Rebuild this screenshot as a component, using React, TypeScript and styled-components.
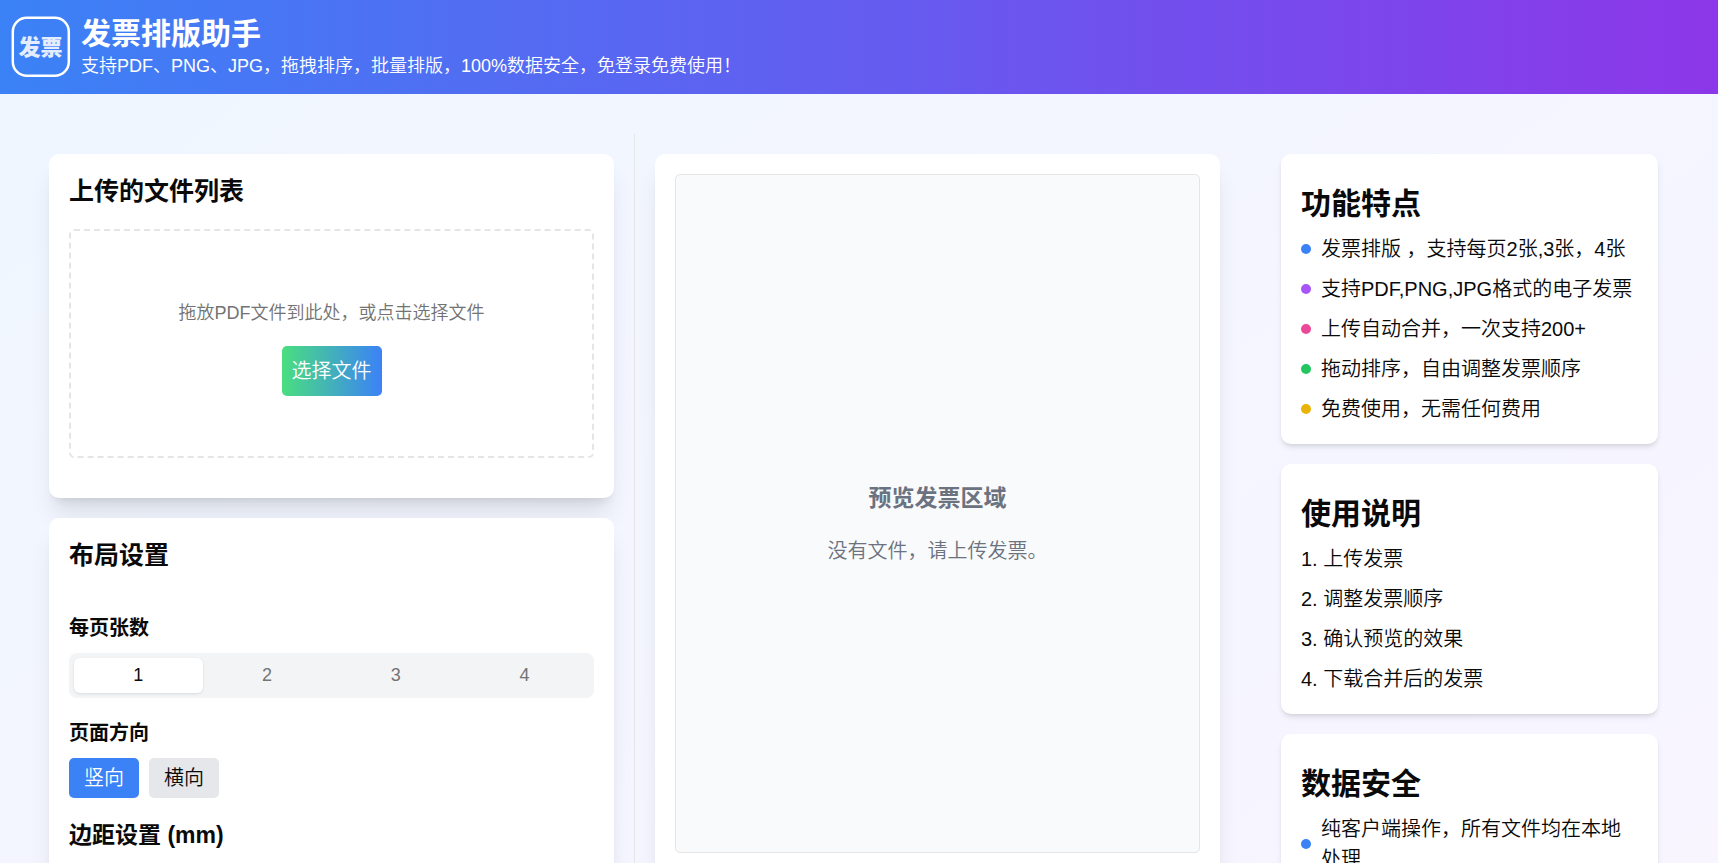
import React, { useState } from "react";
import styled, { createGlobalStyle } from "styled-components";

const GlobalStyle = createGlobalStyle`
  *, *::before, *::after { box-sizing: border-box; }
  body {
    margin: 0;
    color: #0a0a0a;
    font-family: "Liberation Sans", "Noto Sans CJK SC", sans-serif;
    font-size: 20px;
    font-weight: 350;
    line-height: 30px;
  }
  h1, h2, h3, p, ul, ol { margin: 0; padding: 0; }
  button { font: inherit; color: inherit; border: 0; cursor: pointer; }
`;

const Page = styled.div`
  min-height: 150vh;
  background: linear-gradient(to bottom right, #eff6ff, #faf5ff);
`;

const Header = styled.header`
  display: flex;
  align-items: center;
  gap: 10px;
  padding: 14px 11px 15px;
  color: #fff;
  background: linear-gradient(to right, #3b82f6, #8c37e9);
`;

const Logo = styled.svg`
  flex: none;
  width: 60px;
  height: 62px;
`;

const SiteTitle = styled.h1`
  font-size: 30px;
  font-weight: 700;
  line-height: 40px;
`;

const Tagline = styled.p`
  font-size: 18px;
  line-height: 25px;
`;

const Main = styled.main`
  display: grid;
  grid-template-columns: minmax(0, 1fr) 417px;
  gap: 21px;
  padding: 40px 40px 40px 29px;
`;

const Workspace = styled.div`
  display: grid;
  grid-template-columns: minmax(0, 1fr) 1px minmax(0, 1fr);
`;

const Panel = styled.div`
  display: flex;
  flex-direction: column;
  gap: 20px;
  padding: 20px;
`;

const Divider = styled.div`
  background: #e5e5e5;
`;

const Card = styled.section<{ $grow?: boolean }>`
  flex: ${(p) => (p.$grow ? "1" : "none")};
  padding: 20px;
  border-radius: 10px;
  background: #fff;
  box-shadow: 0 20px 25px -5px rgba(0, 0, 0, 0.1), 0 8px 10px -6px rgba(0, 0, 0, 0.1);
`;

const InfoCard = styled.section`
  padding: 30px 20px 20px;
  border-radius: 10px;
  background: #fff;
  box-shadow: 0 4px 6px -1px rgba(0, 0, 0, 0.1), 0 2px 4px -2px rgba(0, 0, 0, 0.1);
`;

const CardTitle = styled.h2`
  font-size: 25px;
  font-weight: 700;
  line-height: 35px;
`;

const InfoTitle = styled.h2`
  margin-bottom: 10px;
  font-size: 30px;
  font-weight: 700;
  line-height: 40px;
`;

const DropZone = styled.div`
  display: flex;
  flex-direction: column;
  align-items: center;
  gap: 20px;
  margin: 20px 0;
  padding: 70px 20px 60px;
  border: 2px dashed #e5e5e5;
  border-radius: 5px;
`;

const DropHint = styled.p`
  color: #737373;
  font-size: 18px;
  line-height: 25px;
`;

const PickButton = styled.button`
  padding: 10px;
  border-radius: 5px;
  color: #fff;
  background: linear-gradient(to right, #4ade80, #3b82f6);
`;

const Settings = styled.div`
  display: flex;
  flex-direction: column;
  gap: 20px;
  margin-top: 40px;
`;

const Field = styled.div`
  display: flex;
  flex-direction: column;
  gap: 10px;
`;

const FieldTitle = styled.h3`
  font-size: 20px;
  font-weight: 700;
  line-height: 30px;
`;

const GroupTitle = styled.h3`
  font-size: 23px;
  font-weight: 700;
  line-height: 35px;
`;

const TabList = styled.div`
  display: grid;
  grid-template-columns: repeat(4, minmax(0, 1fr));
  padding: 5px;
  border-radius: 8px;
  background: #f3f4f6;
`;

const Tab = styled.button<{ $active: boolean }>`
  height: 35px;
  padding: 0;
  border-radius: 6px;
  font-size: 18px;
  line-height: 25px;
  color: ${(p) => (p.$active ? "#0a0a0a" : "#737373")};
  background: ${(p) => (p.$active ? "#fff" : "transparent")};
  box-shadow: ${(p) => (p.$active ? "0 1px 3px rgba(0, 0, 0, 0.1)" : "none")};
`;

const ButtonRow = styled.div`
  display: flex;
  gap: 10px;
`;

const Choice = styled.button<{ $active: boolean }>`
  padding: 5px 15px;
  border-radius: 5px;
  color: ${(p) => (p.$active ? "#fff" : "#0a0a0a")};
  background: ${(p) => (p.$active ? "#3b82f6" : "#e5e7eb")};
`;

const Preview = styled.div`
  display: flex;
  flex-direction: column;
  align-items: center;
  justify-content: center;
  gap: 20px;
  height: calc(100vh - 184px);
  padding-top: 20px;
  border: 1px solid #e5e5e5;
  border-radius: 5px;
  color: #6b7280;
  background: #f9fafb;
`;

const Aside = styled.aside`
  display: flex;
  flex-direction: column;
  gap: 20px;
  padding: 20px;
`;

const Features = styled.ul`
  display: flex;
  flex-direction: column;
  gap: 10px;
  list-style: none;
`;

const Feature = styled.li`
  display: flex;
  align-items: center;
  gap: 10px;
`;

const Dot = styled.span<{ $color: string }>`
  flex: none;
  width: 10px;
  height: 10px;
  border-radius: 50%;
  background: ${(p) => p.$color};
`;

const Steps = styled.ol`
  list-style: decimal inside;
  li + li { margin-top: 10px; }
`;

const features = [
  { color: "#3b82f6", text: "发票排版 ，支持每页2张,3张，4张" },
  { color: "#a855f7", text: "支持PDF,PNG,JPG格式的电子发票" },
  { color: "#ec4899", text: "上传自动合并，一次支持200+" },
  { color: "#22c55e", text: "拖动排序，自由调整发票顺序" },
  { color: "#eab308", text: "免费使用，无需任何费用" },
];

const steps = ["上传发票", "调整发票顺序", "确认预览的效果", "下载合并后的发票"];

export default function App() {
  const [perPage, setPerPage] = useState(1);
  const [orientation, setOrientation] = useState("竖向");

  return (
    <Page lang="zh-CN">
      <GlobalStyle />
      <Header>
        <Logo viewBox="0 0 60 62" role="img" aria-label="发票">
          <rect x="1.8" y="1.8" width="56" height="58" rx="14" fill="none" stroke="#fff" strokeWidth="2.5" />
          <text
            x="29.5"
            y="39"
            textAnchor="middle"
            fontFamily="Noto Sans CJK SC, sans-serif"
            fontSize="22"
            fontWeight="900"
            fill="#e4edff"
          >
            发票
          </text>
        </Logo>
        <div>
          <SiteTitle>发票排版助手</SiteTitle>
          <Tagline>支持PDF、PNG、JPG，拖拽排序，批量排版，100%数据安全，免登录免费使用！</Tagline>
        </div>
      </Header>
      <Main>
        <Workspace>
          <Panel>
            <Card>
              <CardTitle>上传的文件列表</CardTitle>
              <DropZone>
                <DropHint>拖放PDF文件到此处，或点击选择文件</DropHint>
                <PickButton type="button">选择文件</PickButton>
              </DropZone>
            </Card>
            <Card>
              <CardTitle>布局设置</CardTitle>
              <Settings>
                <Field>
                  <FieldTitle id="per-page">每页张数</FieldTitle>
                  <TabList role="tablist" aria-labelledby="per-page">
                    {[1, 2, 3, 4].map((n) => (
                      <Tab
                        key={n}
                        type="button"
                        role="tab"
                        aria-selected={perPage === n}
                        $active={perPage === n}
                        onClick={() => setPerPage(n)}
                      >
                        {n}
                      </Tab>
                    ))}
                  </TabList>
                </Field>
                <Field>
                  <FieldTitle>页面方向</FieldTitle>
                  <ButtonRow>
                    {["竖向", "横向"].map((name) => (
                      <Choice
                        key={name}
                        type="button"
                        aria-pressed={orientation === name}
                        $active={orientation === name}
                        onClick={() => setOrientation(name)}
                      >
                        {name}
                      </Choice>
                    ))}
                  </ButtonRow>
                </Field>
                <GroupTitle>边距设置 (mm)</GroupTitle>
              </Settings>
            </Card>
          </Panel>
          <Divider />
          <Panel>
            <Card $grow>
              <Preview>
                <GroupTitle>预览发票区域</GroupTitle>
                <p>没有文件，请上传发票。</p>
              </Preview>
            </Card>
          </Panel>
        </Workspace>
        <Aside>
          <InfoCard>
            <InfoTitle>功能特点</InfoTitle>
            <Features>
              {features.map((f) => (
                <Feature key={f.text}>
                  <Dot $color={f.color} />
                  <span>{f.text}</span>
                </Feature>
              ))}
            </Features>
          </InfoCard>
          <InfoCard>
            <InfoTitle>使用说明</InfoTitle>
            <Steps>
              {steps.map((s) => (
                <li key={s}>{s}</li>
              ))}
            </Steps>
          </InfoCard>
          <InfoCard>
            <InfoTitle>数据安全</InfoTitle>
            <Features>
              <Feature>
                <Dot $color="#3b82f6" />
                <span>纯客户端操作，所有文件均在本地处理</span>
              </Feature>
            </Features>
          </InfoCard>
        </Aside>
      </Main>
    </Page>
  );
}
